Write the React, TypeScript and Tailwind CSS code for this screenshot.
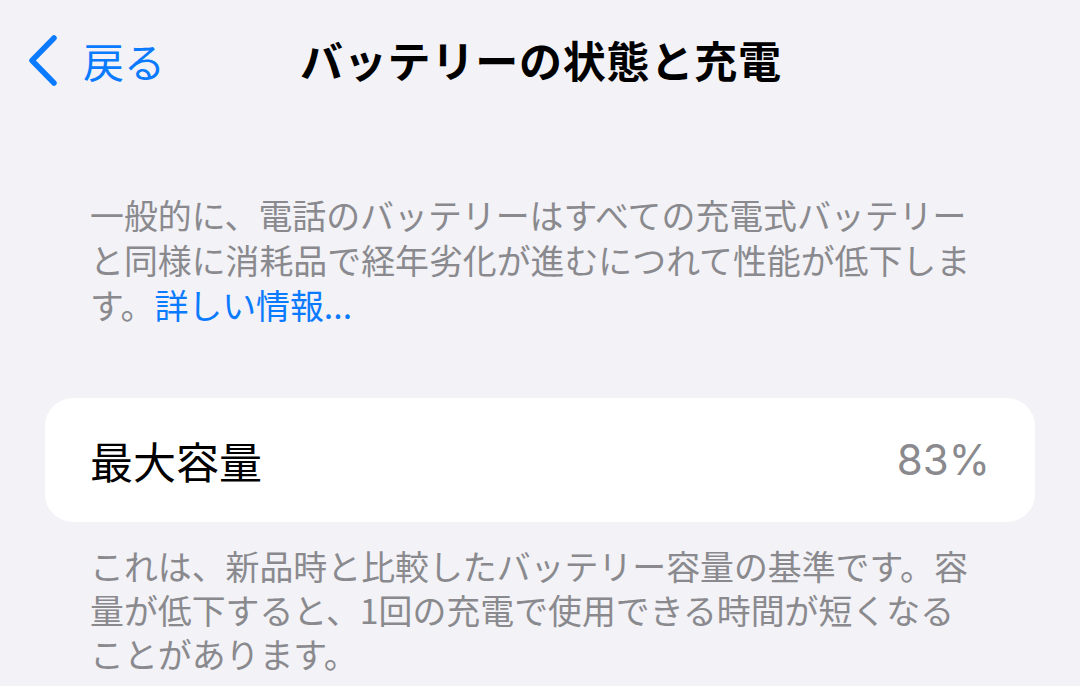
const font = { fontFamily: '"Noto Sans CJK JP", "Noto Sans", sans-serif' };

export default function App() {
	return (
		<main
			className="h-[686px] w-[1080px] overflow-hidden bg-[#f2f2f7] text-black"
			style={font}
		>
			<header className="relative flex h-[124px] items-center">
				<button
					type="button"
					className="flex items-center pl-[16px] text-[#0a7aff]"
				>
					<svg
						width="52"
						height="52"
						viewBox="0 0 52 52"
						fill="none"
						stroke="currentColor"
						strokeWidth="5.5"
						strokeLinecap="round"
						strokeLinejoin="round"
						className="-mt-[2px]"
					>
						<path d="M38 3 L16 25.5 L38 48" />
					</svg>
					<span className="-mt-[4px] ml-[15px] text-[41px] leading-none">
						戻る
					</span>
				</button>
				<h1 className="absolute left-[300px] top-[38px] text-[43px] font-bold leading-none tracking-[0.8px]">
					バッテリーの状態と充電
				</h1>
			</header>

			<p className="ml-[90px] mt-[68px] w-[886px] text-[33.9px] leading-[45px] text-[#8a8a8e]">
				一般的に、電話のバッテリーはすべての充電式バッテリーと同様に消耗品で経年劣化が進むにつれて性能が低下します。
				<span className="text-[#0a7aff]">詳しい情報...</span>
			</p>

			<section className="mx-[45px] mt-[71px] flex h-[124px] items-center justify-between rounded-[28px] bg-white px-[45px]">
				<span className="text-[43px] leading-none">最大容量</span>
				<span
					className="text-[42px] leading-none text-[#8a8a8e]"
					style={{ fontFamily: '"Inter", "Noto Sans", sans-serif' }}
				>
					83%
				</span>
			</section>

			<p className="ml-[90px] mt-[22px] w-[886px] text-[33.9px] leading-[44px] text-[#8a8a8e]">
				これは、新品時と比較したバッテリー容量の基準です。容量が低下すると、1回の充電で使用できる時間が短くなることがあります。
			</p>
		</main>
	);
}
